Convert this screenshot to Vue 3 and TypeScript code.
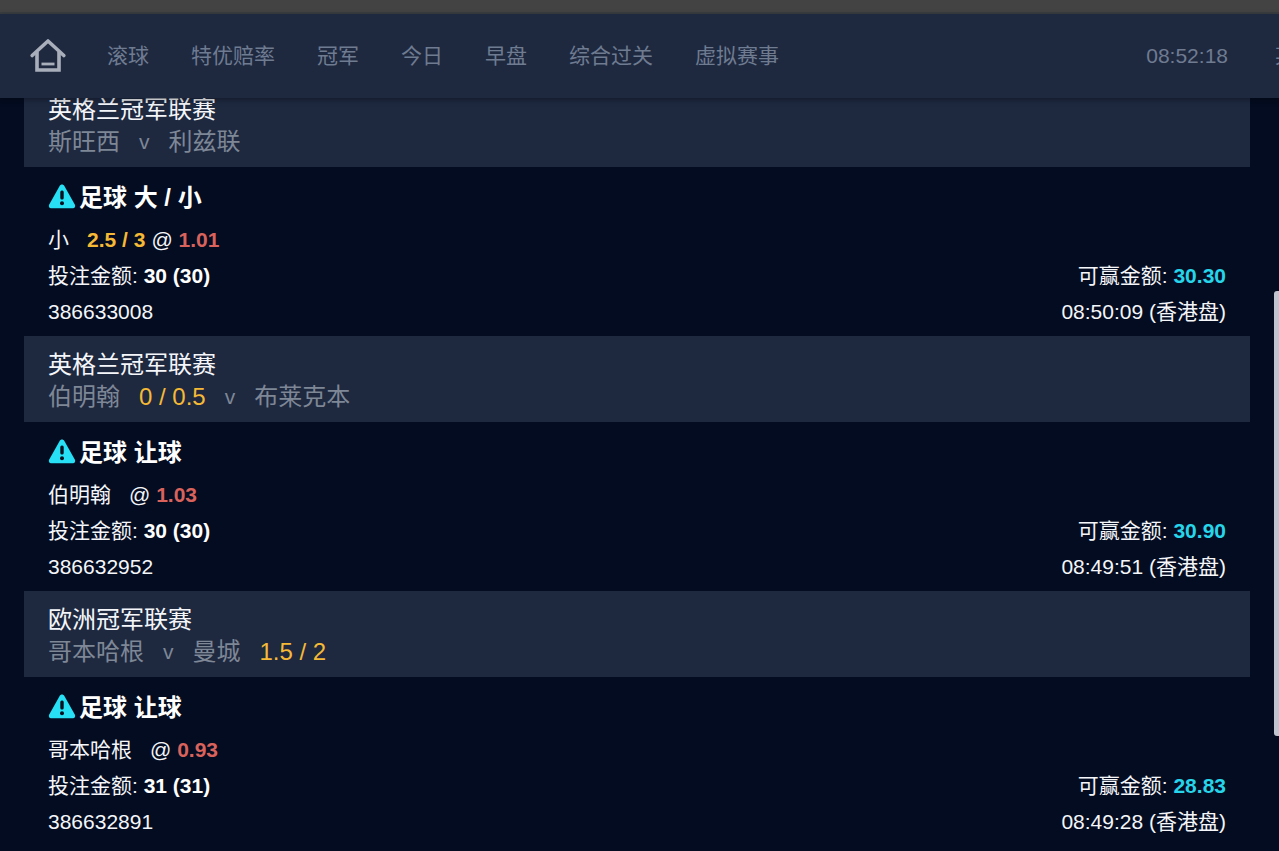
<script setup lang="ts">
import { onMounted, ref } from 'vue';

interface Bet {
  league: string;
  home: string;
  away: string;
  homeHdp?: string;
  awayHdp?: string;
  market: string;
  pick: string;
  line?: string;
  odds: string;
  stake: string;
  win: string;
  id: string;
  time: string;
}

const navItems = ['滚球', '特优赔率', '冠军', '今日', '早盘', '综合过关', '虚拟赛事'];

const bets: Bet[] = [
  { league: '英格兰冠军联赛', home: '斯旺西', away: '利兹联', market: '足球 大 / 小', pick: '小', line: '2.5 / 3', odds: '1.01', stake: '30 (30)', win: '30.30', id: '386633008', time: '08:50:09' },
  { league: '英格兰冠军联赛', home: '伯明翰', homeHdp: '0 / 0.5', away: '布莱克本', market: '足球 让球', pick: '伯明翰', odds: '1.03', stake: '30 (30)', win: '30.90', id: '386632952', time: '08:49:51' },
  { league: '欧洲冠军联赛', home: '哥本哈根', away: '曼城', awayHdp: '1.5 / 2', market: '足球 让球', pick: '哥本哈根', odds: '0.93', stake: '31 (31)', win: '28.83', id: '386632891', time: '08:49:28' },
];

const scroller = ref<HTMLElement | null>(null);

onMounted(() => {
  // 列表已滚动一段, 第一行联赛被顶栏遮住一部分
  if (scroller.value) scroller.value.scrollTop = 17;
});
</script>

<template>
  <div class="page">
    <div class="top-strip"></div>
    <header class="nav">
      <svg class="home" width="36" height="36" viewBox="0 0 36 36" fill="none" stroke="#a9aebb" stroke-width="3.600">
        <path d="M2.200 19.500 18 5l15.800 14.500" stroke-linejoin="round" stroke-linecap="round" />
        <path d="M7 16v18h22V16" />
        <path d="M11.500 28h13" stroke-width="2.800" />
      </svg>
      <a v-for="item in navItems" :key="item" class="nav-item">{{ item }}</a>
      <span class="clock">08:52:18</span>
      <span class="nav-cut">某</span>
    </header>

    <main ref="scroller" class="list">
      <section v-for="bet in bets" :key="bet.id" class="bet">
        <div class="band">
          <div class="league">{{ bet.league }}</div>
          <div class="teams">
            <span>{{ bet.home }}</span>
            <span v-if="bet.homeHdp" class="hdp">{{ bet.homeHdp }}</span>
            <span class="vs">v</span>
            <span>{{ bet.away }}</span>
            <span v-if="bet.awayHdp" class="hdp">{{ bet.awayHdp }}</span>
          </div>
        </div>
        <div class="body">
          <div class="market">
            <svg class="warn" width="28" height="26" viewBox="0 0 28 26">
              <path d="M14 1.500c1 0 1.800.5 2.400 1.500l10.400 18.400c1 1.900-.2 3.900-2.300 3.900H3.500c-2.100 0-3.300-2-2.300-3.900L11.600 3c.6-1 1.400-1.500 2.400-1.500z" fill="#27e0f5" />
              <rect x="12.300" y="7.500" width="3.400" height="9" rx="1.500" fill="#04101f" />
              <circle cx="14" cy="20.300" r="2" fill="#04101f" />
            </svg>
            <span>{{ bet.market }}</span>
          </div>
          <div class="row pick">
            <span>{{ bet.pick }}</span>
            <b v-if="bet.line" class="line">{{ bet.line }}</b>
            <span class="at">@ <b class="odds">{{ bet.odds }}</b></span>
          </div>
          <div class="row split">
            <span>投注金额: <b>{{ bet.stake }}</b></span>
            <span>可赢金额: <b class="win">{{ bet.win }}</b></span>
          </div>
          <div class="row split">
            <span>{{ bet.id }}</span>
            <span>{{ bet.time }} (香港盘)</span>
          </div>
        </div>
      </section>
    </main>

    <div class="thumb"></div>
  </div>
</template>

<style scoped>
.page {
  position: relative;
  width: 1279px;
  height: 851px;
  overflow: hidden;
  background: #030c20;
  font-family: "Liberation Sans", "Noto Sans CJK SC", sans-serif;
  color: #f4f6fa;
  font-size: 21px;
}

.top-strip {
  height: 14px;
  background: #434343;
  border-bottom: 2px solid #3a3d40;
  box-sizing: border-box;
}

.nav {
  position: relative;
  z-index: 2;
  display: flex;
  align-items: center;
  height: 84px;
  padding: 0 0 4px 30px;
  box-sizing: border-box;
  gap: 42px;
  background: #1e2940;
  box-shadow: 0 2px 6px rgba(0, 0, 0, 0.35);
  color: #6f7b90;
  white-space: nowrap;
}

.home {
  flex-shrink: 0;
  margin-right: -1px;
}

.clock {
  margin-left: auto;
  margin-right: 5px;
  margin-top: 4px;
}

.nav-cut {
  width: 4px;
  overflow: hidden;
  flex-shrink: 0;
}

.list {
  height: 753px;
  overflow: hidden;
  padding: 0 29px 30px 24px;
  box-sizing: border-box;
}

.band {
  height: 86px;
  padding: 14px 24px 0;
  box-sizing: border-box;
  background: #1e2940;
}

.league {
  font-size: 24px;
  line-height: 30px;
}

.teams {
  display: flex;
  gap: 19px;
  margin-top: 2px;
  font-size: 24px;
  line-height: 30px;
  color: #7e8796;
}

.vs {
  font-size: 21px;
}

.hdp {
  color: #f5b935;
}

.body {
  height: 169px;
  padding: 10px 24px 0;
  box-sizing: border-box;
}

.market {
  display: flex;
  align-items: center;
  gap: 3px;
  height: 36px;
  margin-bottom: 9px;
  font-size: 24px;
  font-weight: 700;
  color: #fff;
}

.warn {
  margin-top: 2px;
}

.row {
  height: 36px;
  line-height: 36px;
}

.pick {
  display: flex;
  gap: 18px;
}

.line {
  color: #f5b935;
  margin-right: -12px;
}

.at {
  color: #f4f6fa;
}

.odds {
  color: #d9625c;
}

.split {
  display: flex;
  justify-content: space-between;
}

.split b {
  color: #fff;
}

.split b.win {
  color: #27d5ea;
}

.thumb {
  position: absolute;
  right: 0;
  top: 291px;
  width: 5px;
  height: 445px;
  background: #c1c5cf;
  border-radius: 3px 0 0 3px;
}
</style>
